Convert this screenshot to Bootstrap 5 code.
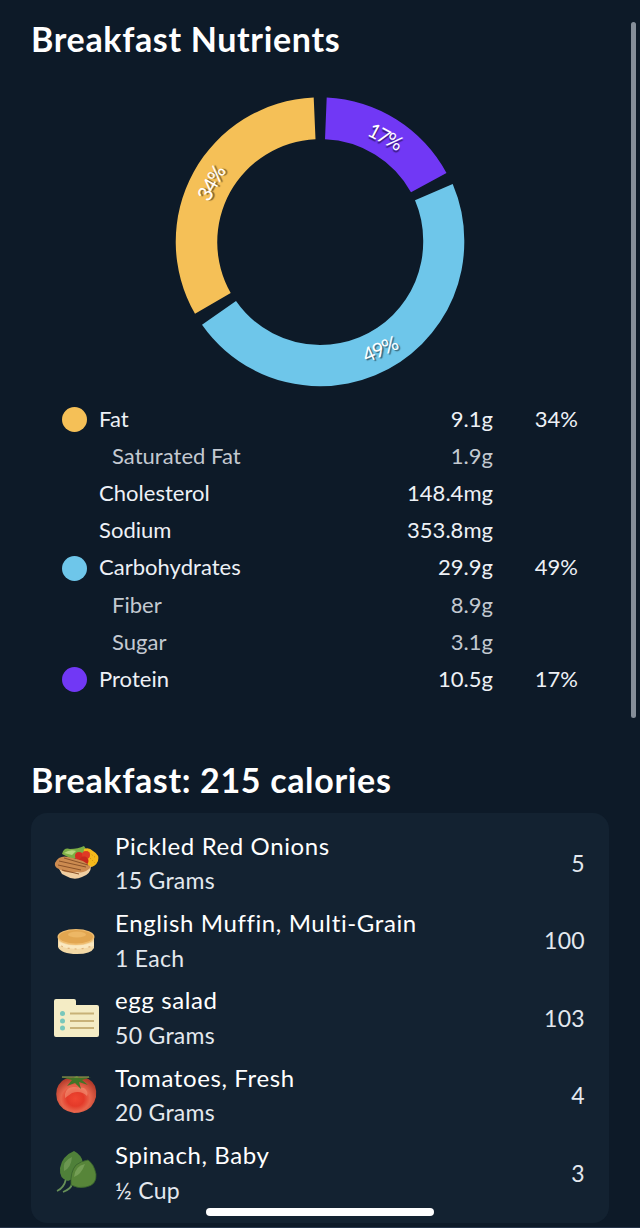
<!DOCTYPE html>
<html lang="en">
<head>
<meta charset="utf-8">
<meta name="viewport" content="width=device-width, initial-scale=1">
<title>Breakfast Nutrients</title>
<link href="https://cdn.jsdelivr.net/npm/bootstrap@5.3.0/dist/css/bootstrap.min.css" rel="stylesheet">
<style>
  body { background: #0d1a28; color: #edf1f6; font-family: Lato, "Noto Sans", sans-serif; overflow: hidden; }
  .screen { width: 640px; height: 1228px; border-bottom: 1px solid #26354a; }
  .page-title { font-size: 34px; line-height: 40px; font-weight: 700; color: #fff; letter-spacing: .66px; margin-left: 7px; }
  .title-top { padding-top: 19px; }
  .title-meal { padding-top: 61px; }
  .donut { width: 292px; height: 292px; margin: 37px auto 13px 174px; }
  .donut text { font-size: 20px; fill: #fff; text-anchor: middle; text-shadow: 1px 2px 1px rgba(0,0,0,.5); }
  .legend { margin: 0 62px; font-size: 22px; letter-spacing: .03px; }
  .legend-row { height: 37.2px; line-height: 36px; }
  .legend-row > span:not(.dot) { margin-top: -2px; }
  .dot { width: 25px; height: 25px; margin-right: 12px; flex: none; }
  .sub { color: #c3c9d1; }
  .sub .nutrient { padding-left: 13px; }
  .share { width: 85px; }
  .meal { background: #132231; border-radius: 16px; width: 578px; height: 410px; margin: 13px 0 0 31px; padding: 10px 24px 0 23px; }
  .food { height: 77.4px; font-size: 24px; line-height: 34.5px; letter-spacing: .62px; padding-top: 4px; }
  .food svg { width: 46px; height: 46px; margin-right: 15px; flex: none; }
  .food-name { color: #fff; }
  .qty { font-size: 23px; color: #e3e8ee; letter-spacing: .3px; }
  .scroll-thumb { right: 4px; top: 22px; width: 5px; height: 696px; background: #858e99; }
  .home-bar { left: 206px; bottom: 11px; width: 228px; height: 8px; background: #fff; }
</style>
</head>
<body>
<main class="screen position-relative overflow-hidden">
  <h1 class="page-title title-top mb-0 ps-4">Breakfast Nutrients</h1>

  <svg class="donut d-block" viewBox="174 96 292 292" role="img" aria-label="Nutrient shares">
    <path fill="#7138f5" d="M326.7 97.5A144.3 144.3 0 0 1 446.5 173L411 192.300A103 103 0 0 0 325 139.300Z"/>
    <path fill="#6ec6ea" d="M452.700 184A144.3 144.3 0 0 1 464.300 242A144.3 144.3 0 0 1 320 386.200A144.3 144.3 0 0 1 202 324.700L236 301A103 103 0 0 0 320 345A103 103 0 0 0 423.200 242A103 103 0 0 0 415 200.200Z"/>
    <path fill="#f5c057" d="M195 313.700A144.3 144.3 0 0 1 313.700 97.500L315.500 139.200A103 103 0 0 0 230.700 293Z"/>
    <text transform="translate(385.500 137) rotate(28)" y="7" textLength="36">17%</text>
    <text transform="translate(380.500 349) rotate(-24)" y="7" textLength="37">49%</text>
    <text transform="translate(211.500 183) rotate(-61)" y="7" textLength="37">34%</text>
  </svg>

  <section class="legend">
    <div class="legend-row d-flex align-items-center"><span class="dot rounded-circle" style="background:#f5c057"></span><span class="nutrient flex-grow-1">Fat</span><span>9.1g</span><span class="share text-end">34%</span></div>
    <div class="legend-row sub d-flex align-items-center"><span class="dot"></span><span class="nutrient flex-grow-1">Saturated Fat</span><span>1.9g</span><span class="share"></span></div>
    <div class="legend-row d-flex align-items-center"><span class="dot"></span><span class="nutrient flex-grow-1">Cholesterol</span><span>148.4mg</span><span class="share"></span></div>
    <div class="legend-row d-flex align-items-center"><span class="dot"></span><span class="nutrient flex-grow-1">Sodium</span><span>353.8mg</span><span class="share"></span></div>
    <div class="legend-row d-flex align-items-center"><span class="dot rounded-circle" style="background:#6ec6ea"></span><span class="nutrient flex-grow-1">Carbohydrates</span><span>29.9g</span><span class="share text-end">49%</span></div>
    <div class="legend-row sub d-flex align-items-center"><span class="dot"></span><span class="nutrient flex-grow-1">Fiber</span><span>8.9g</span><span class="share"></span></div>
    <div class="legend-row sub d-flex align-items-center"><span class="dot"></span><span class="nutrient flex-grow-1">Sugar</span><span>3.1g</span><span class="share"></span></div>
    <div class="legend-row d-flex align-items-center"><span class="dot rounded-circle" style="background:#7138f5"></span><span class="nutrient flex-grow-1">Protein</span><span>10.5g</span><span class="share text-end">17%</span></div>
  </section>

  <h2 class="page-title title-meal mb-0 ps-4">Breakfast: 215 calories</h2>

  <section class="meal">
    <div class="food d-flex align-items-center">
      <svg viewBox="0 0 46 46">
        <path fill="#7cae45" d="M8 14Q10 7 16 9Q24 9 30 6L32 9L28 17L18 19Z"/>
        <path fill="#b5d67c" d="M10 13Q16 9 22 11L18 15Z"/>
        <path fill="#f4b91b" d="M30 9Q35 7 39 11Q46 15 44 21Q41 28 34 27L29 18Z"/>
        <path stroke="#c98813" stroke-dasharray="1 2" d="M33 11L42 18M32 14L41 23"/>
        <circle cx="25" cy="16" r="4" fill="#d52d20"/><circle cx="32" cy="15" r="4" fill="#df3a25"/><circle cx="30" cy="21" r="4.500" fill="#c7281d"/>
        <path fill="#f0cfa2" d="M4 27Q14 34 37 26Q37 34 28 37Q20 41 12 36L8 34Z"/>
        <path fill="#cc8b50" d="M1 23Q5 15 14 17Q29 19 37 27Q31 34 23 32Q12 34 5 29Q0 27 1 23Z"/>
        <path fill="none" stroke="#8a5229" stroke-width="1" d="M5 21L32 27M4 25L27 30M10 18L34 25M8 30L25 34"/>
      </svg>
      <div class="flex-grow-1"><div class="food-name">Pickled Red Onions</div><div class="qty">15 Grams</div></div><div class="qty">5</div>
    </div>
    <div class="food d-flex align-items-center">
      <svg viewBox="0 0 46 46">
        <path fill="#f3d9a6" d="M4 19V29Q7 36 23 36Q37 36 40 30V19Z"/>
        <path fill="#fae8bf" d="M5 24Q21 31 40 24V28Q22 34 5 28Z"/>
        <ellipse cx="22" cy="19" rx="18.500" ry="8" fill="#efbd70"/>
        <ellipse cx="22" cy="18.700" rx="17" ry="6.800" fill="#e2a650"/>
        <ellipse cx="23" cy="16.500" rx="9" ry="3" fill="#edb765"/>
        <path stroke="#dfb57d" stroke-width="1.200" stroke-dasharray="2 5" d="M7 28Q22 34 38 28" fill="none"/>
      </svg>
      <div class="flex-grow-1"><div class="food-name">English Muffin, Multi-Grain</div><div class="qty">1 Each</div></div><div class="qty">100</div>
    </div>
    <div class="food d-flex align-items-center">
      <svg viewBox="0 0 46 46">
        <path fill="#f4ecc5" d="M2 4H20Q22 4 22 6V10H43Q45 10 45 12V40Q45 42 43 42H2Q0 42 0 40V6Q0 4 2 4Z"/>
        <g fill="#79c7bb"><circle cx="8.500" cy="18.500" r="2.500"/><circle cx="8.500" cy="26" r="2.500"/><circle cx="8.500" cy="33" r="2.500"/></g>
        <path stroke="#c8b278" stroke-width="2" d="M16 18.500H40M16 26H40M16 33H40"/>
      </svg>
      <div class="flex-grow-1"><div class="food-name">egg salad</div><div class="qty">50 Grams</div></div><div class="qty">103</div>
    </div>
    <div class="food d-flex align-items-center">
      <svg viewBox="0 0 46 46">
        <defs><radialGradient id="tomato" cx=".48" cy=".6" r=".6"><stop offset="0" stop-color="#f04632"/><stop offset=".35" stop-color="#e43a29"/><stop offset=".6" stop-color="#e8654c"/><stop offset="1" stop-color="#b13a2a"/></radialGradient></defs>
        <path fill="url(#tomato)" d="M22 6Q35 3 41 14Q45 25 37 35Q30 41 20 41Q7 39 3 28Q0 16 8 9Q14 4 22 6Z"/>
        <path fill="#f49b7c" opacity=".55" d="M11 22Q13 14 21 15L30 16Q35 20 33 24Q27 18 18 21L11 26Z"/>
        <path fill="#427527" d="M7 5L19 6L23 4L25 6L37 5L28 8L34 13L25 10L27 17L21 11L13 14L18 8Z"/>
        <path stroke="#a3ac52" d="M8 5H35" fill="none"/>
      </svg>
      <div class="flex-grow-1"><div class="food-name">Tomatoes, Fresh</div><div class="qty">20 Grams</div></div><div class="qty">4</div>
    </div>
    <div class="food d-flex align-items-center">
      <svg viewBox="0 0 46 46">
        <path fill="none" stroke="#668f58" stroke-width="1.800" d="M12 29Q10 38 3 41M18 34Q17 39 9 42"/>
        <path fill="#4f8039" d="M20 1Q28 5 29 13Q28 25 14 31Q5 29 6 18Q8 6 20 1Z"/>
        <path fill="#78a05b" opacity=".7" d="M18 7Q8 11 10 21Q17 18 18 7Z"/>
        <path fill="#578539" stroke="#36612d" stroke-width=".8" d="M34 10Q40 14 42 24Q43 35 32 37Q24 39 17 35Q16 22 22 15Q27 11 34 10Z"/>
        <path fill="#80a861" opacity=".7" d="M31 14Q21 16 20 27Q27 25 31 14Z"/>
      </svg>
      <div class="flex-grow-1"><div class="food-name">Spinach, Baby</div><div class="qty">½ Cup</div></div><div class="qty">3</div>
    </div>
  </section>

  <div class="scroll-thumb position-absolute rounded-pill"></div>
  <div class="home-bar position-absolute rounded-pill"></div>
</main>
<script src="https://cdn.jsdelivr.net/npm/bootstrap@5.3.0/dist/js/bootstrap.bundle.min.js"></script>
</body>
</html>
